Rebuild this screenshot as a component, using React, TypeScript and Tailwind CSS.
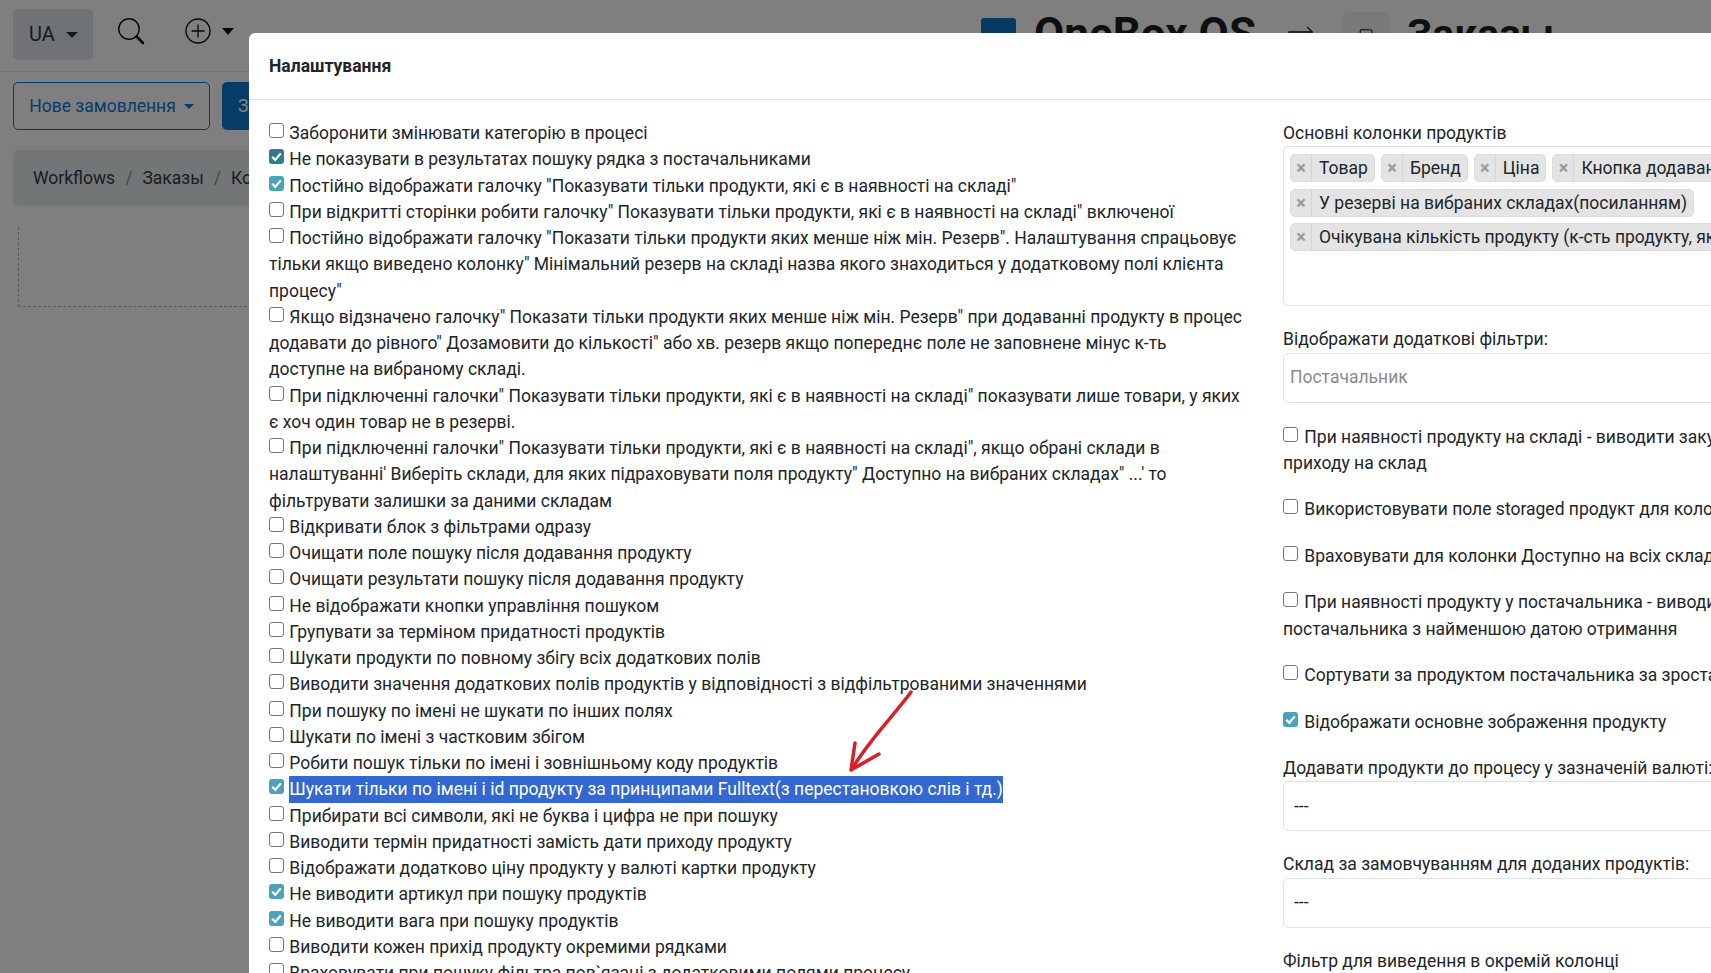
import { MoveRight, Smartphone } from 'lucide-react';

const leftOptions: { text: string; checked?: boolean; selected?: boolean; focused?: boolean }[] = [
  { text: 'Заборонити змінювати категорію в процесі' },
  { text: 'Не показувати в результатах пошуку рядка з постачальниками', checked: true, focused: true },
  { text: 'Постійно відображати галочку "Показувати тільки продукти, які є в наявності на складі"', checked: true },
  { text: 'При відкритті сторінки робити галочку" Показувати тільки продукти, які є в наявності на складі" включеної' },
  { text: 'Постійно відображати галочку "Показати тільки продукти яких менше ніж мін. Резерв". Налаштування спрацьовує тільки якщо виведено колонку" Мінімальний резерв на складі назва якого знаходиться у додатковому полі клієнта процесу"' },
  { text: 'Якщо відзначено галочку" Показати тільки продукти яких менше ніж мін. Резерв" при додаванні продукту в процес додавати до рівного" Дозамовити до кількості" або хв. резерв якщо попереднє поле не заповнене мінус к-ть доступне на вибраному складі.' },
  { text: 'При підключенні галочки" Показувати тільки продукти, які є в наявності на складі" показувати лише товари, у яких є хоч один товар не в резерві.' },
  { text: "При підключенні галочки\" Показувати тільки продукти, які є в наявності на складі\", якщо обрані склади в налаштуванні' Виберіть склади, для яких підраховувати поля продукту\" Доступно на вибраних складах\" ...' то фільтрувати залишки за даними складам" },
  { text: 'Відкривати блок з фільтрами одразу' },
  { text: 'Очищати поле пошуку після додавання продукту' },
  { text: 'Очищати результати пошуку після додавання продукту' },
  { text: 'Не відображати кнопки управління пошуком' },
  { text: 'Групувати за терміном придатності продуктів' },
  { text: 'Шукати продукти по повному збігу всіх додаткових полів' },
  { text: 'Виводити значення додаткових полів продуктів у відповідності з відфільтрованими значеннями' },
  { text: 'При пошуку по імені не шукати по інших полях' },
  { text: 'Шукати по імені з частковим збігом' },
  { text: 'Робити пошук тільки по імені і зовнішньому коду продуктів' },
  { text: 'Шукати тільки по імені і id продукту за принципами Fulltext(з перестановкою слів і тд.)', checked: true, selected: true },
  { text: 'Прибирати всі символи, які не буква і цифра не при пошуку' },
  { text: 'Виводити термін придатності замість дати приходу продукту' },
  { text: 'Відображати додатково ціну продукту у валюті картки продукту' },
  { text: 'Не виводити артикул при пошуку продуктів', checked: true },
  { text: 'Не виводити вага при пошуку продуктів', checked: true },
  { text: 'Виводити кожен прихід продукту окремими рядками' },
  { text: 'Враховувати при пошуку фільтра пов`язані з додатковими полями процесу' },
];

const tagRows = [
  ['Товар', 'Бренд', 'Ціна', 'Кнопка додавання'],
  ['У резерві на вибраних складах(посиланням)'],
  ['Очікувана кількість продукту (к-сть продукту, який очікується)'],
];

function Check({ checked, focused }: { checked?: boolean; focused?: boolean }) {
  if (!checked) {
    return <span className="inline-block align-[1px] w-[15px] h-[15px] mr-px rounded-[3px] border border-[#767676] bg-white"></span>;
  }
  return (
    <span className={`inline-block align-[1px] w-[15px] h-[15px] mr-px rounded-[3px] ${focused ? 'bg-[#35798f]' : 'bg-[#4aa3bb]'}`}>
      <svg viewBox="0 0 15 15" width="15" height="15" fill="none">
        <path d="M3.2 7.8L6.2 10.8L11.8 4.4" stroke="#fff" strokeWidth="2.2" />
      </svg>
    </span>
  );
}

function Caret({ className }: { className: string }) {
  return <span className={`inline-block border-x-[5px] border-x-transparent border-t-[5px] ${className}`}></span>;
}

function Tag({ text }: { text: string }) {
  return (
    <span className="flex items-stretch h-[28px] bg-[#e4e4e4] border border-[#dcdcdc] rounded-[5px] whitespace-nowrap">
      <span className="w-[21px] flex items-center justify-center text-[#999] font-bold text-[18px] border-r border-[#d4d4d4]">×</span>
      <span className="pl-[7px] pr-[6px] flex items-center">{text}</span>
    </span>
  );
}

function Field({ children, className }: { children?: React.ReactNode; className: string }) {
  return (
    <div className={`h-[50px] flex items-center border border-[#dee2e6] rounded-[5px] px-[6px] ${className}`}>{children}</div>
  );
}

function RightOption({ lines, checked }: { lines: string[]; checked?: boolean }) {
  return (
    <div className="mb-[20.25px] whitespace-nowrap">
      <Check checked={checked} /> <span className="ml-px">{lines[0]}</span>
      {lines[1] && <div>{lines[1]}</div>}
    </div>
  );
}

export default function App() {
  return (
    <div className="relative h-[973px] overflow-hidden bg-white font-['Roboto',sans-serif] text-[17.5px] leading-[26.25px] text-[#212529]">
      {/* page behind the dialog */}
      <header className="h-[72px] border-b border-[#dee2e6] flex items-center pl-[13px]">
        <div className="w-[80px] h-[51px] -mt-[2px] rounded-[5px] bg-[#dfe7ea] flex items-center pl-[16px] gap-[11px] text-[#2f3538] text-[20px]">
          UA <Caret className="border-x-[6px] border-t-[6px] border-t-[#2f3538]" />
        </div>
        <svg className="ml-[24px] -mt-[9px]" width="28" height="27" viewBox="0 0 28 27" fill="none">
          <circle cx="12" cy="11" r="10.2" stroke="#111" strokeWidth="1.4" />
          <path d="M19.5 18.5L26 25" stroke="#111" strokeWidth="2.6" strokeLinecap="round" />
        </svg>
        <svg className="ml-[40px] -mt-[9px]" width="26" height="26" viewBox="0 0 26 26" fill="none">
          <circle cx="13" cy="13" r="12" stroke="#111" strokeWidth="1.4" />
          <path d="M13 6.5V19.5M6.5 13H19.5" stroke="#111" strokeWidth="1.3" />
        </svg>
        <Caret className="ml-[11px] -mt-[9px] border-t-[#111] border-x-[6px] border-t-[7px]" />
        <div className="ml-[747px] w-[35px] h-[36px] bg-[#0b74c4] rounded-[3px]"></div>
        <span className="ml-[18px] -mt-[2px] text-[44px] font-bold text-[#1b1e21] whitespace-nowrap">OneBox OS</span>
        <MoveRight className="ml-[30px] -mt-[8px] w-[29px] h-[28px] text-[#111]" strokeWidth={1.1} />
        <div className="ml-[28px] w-[47px] h-[44px] -mt-[4px] bg-[#f1f3f5] rounded-[5px] flex items-center justify-center">
          <Smartphone className="w-[20px] h-[20px] mt-[8px] text-[#111]" strokeWidth={1.3} />
        </div>
        <span className="ml-[17px] -mt-[2px] text-[41px] font-bold text-[#1b1e21]">Заказы</span>
      </header>
      <div className="flex gap-[12px] pl-[13px] pt-[10px]">
        <div className="w-[197px] h-[48px] border border-[#0d7bd0] rounded-[5px] flex items-center justify-center gap-[8px] text-[#0d7bd0]">
          Нове замовлення <Caret className="border-t-[#0d7bd0]" />
        </div>
        <div className="w-[200px] h-[48px] bg-[#0d7bd0] rounded-[5px] flex items-center pl-[16px] text-white">Зберегти</div>
      </div>
      <div className="mx-[13px] mt-[20px] h-[56px] bg-[#e7ecef] rounded-[5px] flex items-center gap-[10px] pl-[20px] text-[#343a40]">
        Workflows <span className="text-[#868e96]">/</span> Заказы <span className="text-[#868e96]">/</span> Ковбаса
      </div>
      <div className="ml-[18px] mt-[21px] w-[400px] h-[80px] border-l border-b border-dashed border-[#adb5bd]"></div>

      <div className="absolute inset-0 bg-black/50"></div>

      {/* settings dialog, runs past the right edge of the window */}
      <div className="absolute left-[249px] top-[33px] w-[1800px] bottom-0 bg-white rounded-t-[6px]">
        <div className="h-[67px] border-b border-[#dee2e6] pl-[20px] flex items-center font-bold">Налаштування</div>
        <div className="flex gap-[41px] pl-[20px] pt-[20px]">
          <div className="w-[973px] shrink-0">
            {leftOptions.map((o, i) => (
              <div key={i}>
                <Check checked={o.checked} focused={o.focused} />{' '}
                {o.selected ? <span className="inline-block bg-[#3367d1] text-white">{o.text}</span> : o.text}
              </div>
            ))}
          </div>
          <div className="w-[690px] shrink-0">
            <div>Основні колонки продуктів</div>
            <div className="h-[160px] mb-[20px] border border-[#dee2e6] rounded-[5px] pl-[6px] pt-[7px] flex flex-col gap-[6.5px] overflow-hidden">
              {tagRows.map((row, i) => (
                <div key={i} className="flex gap-[6px]">
                  {row.map((t) => (
                    <Tag key={t} text={t} />
                  ))}
                </div>
              ))}
            </div>
            <div>Відображати додаткові фільтри:</div>
            <Field className="mb-[21px]">
              <span className="text-[#8a8a8a]">Постачальник</span>
            </Field>
            <RightOption lines={['При наявності продукту на складі - виводити закупівельну ціну останнього', 'приходу на склад']} />
            <RightOption lines={['Використовувати поле storaged продукт для колонки']} />
            <RightOption lines={['Враховувати для колонки Доступно на всіх складах']} />
            <RightOption lines={['При наявності продукту у постачальника - виводити продукт', 'постачальника з найменшою датою отримання']} />
            <RightOption lines={['Сортувати за продуктом постачальника за зростанням']} />
            <RightOption lines={['Відображати основне зображення продукту']} checked />
            <div>Додавати продукти до процесу у зазначеній валюті:</div>
            <Field className="mb-[20px]">
              <span className="pl-[4px]">---</span>
            </Field>
            <div>Склад за замовчуванням для доданих продуктів:</div>
            <Field className="mb-[20px]">
              <span className="pl-[4px]">---</span>
            </Field>
            <div>Фільтр для виведення в окремій колонці</div>
          </div>
        </div>
      </div>

      {/* red annotation arrow drawn on the screenshot */}
      <svg className="absolute left-[840px] top-[685px]" width="80" height="95" viewBox="0 0 80 95" fill="none">
        <path d="M71 7C56 28 28 56 12 84" stroke="#dc1e26" strokeWidth="3.5" strokeLinecap="round" />
        <path d="M15 58L11 85L39 69" stroke="#dc1e26" strokeWidth="3.5" strokeLinecap="round" strokeLinejoin="round" />
      </svg>
    </div>
  );
}
